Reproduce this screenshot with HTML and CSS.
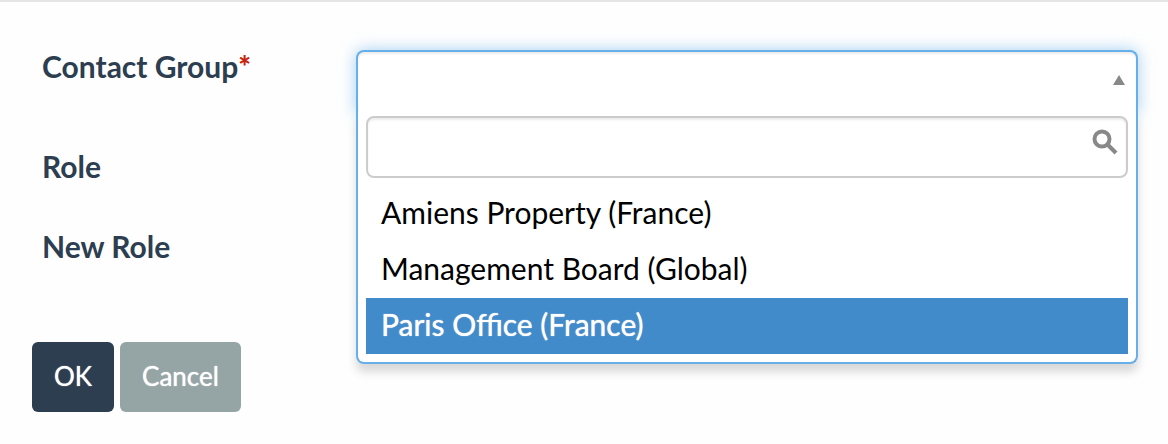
FILE: index.html
```html
<!DOCTYPE html>
<html lang="en">
<head>
<meta charset="utf-8">
<title>Contact Group</title>
<link rel="stylesheet" href="styles.css">
</head>
<body>
<form class="form">
  <div class="field field-group">
    <label class="label" for="group">Contact Group<span class="required">*</span></label>
    <div class="picker">
      <button class="picker-toggle" id="group" type="button" aria-haspopup="listbox" aria-expanded="true">
        <svg class="arrow" viewBox="0 0 12 10" aria-hidden="true"><path d="M6 0L12 10H0Z"/></svg>
      </button>
      <div class="menu">
        <div class="search">
          <input class="search-input" type="text" aria-label="Search contact groups">
          <svg class="search-icon" viewBox="0 0 26 26" aria-hidden="true"><circle cx="10" cy="10" r="7.5"/><path d="M15.5 15.5L24 24"/></svg>
        </div>
        <ul class="options" role="listbox" aria-label="Contact groups">
          <li class="option" role="option" aria-selected="false">Amiens Property (France)</li>
          <li class="option" role="option" aria-selected="false">Management Board (Global)</li>
          <li class="option option-active" role="option" aria-selected="true">Paris Office (France)</li>
        </ul>
      </div>
    </div>
  </div>
  <div class="field"><span class="label">Role</span></div>
  <div class="field"><span class="label">New Role</span></div>
  <div class="actions">
    <button class="btn btn-primary" type="submit">OK</button>
    <button class="btn btn-secondary" type="button">Cancel</button>
  </div>
</form>
</body>
</html>
```

FILE: styles.css
```css
* {
  box-sizing: border-box;
}

body {
  margin: 0;
  background: #fefefe;
  color: #000;
  font-family: Lato, "Liberation Sans", sans-serif;
  font-size: 30px;
  line-height: 40px;
}

.form {
  padding: 44px 30px 32px 32px;
  border-top: 2px solid #e5e5e5;
}

.field {
  display: grid;
  grid-template-columns: 324px 1fr;
  margin-bottom: 40px;
}

.field-group {
  margin-bottom: 32px;
}

.label {
  padding-left: 10px;
  color: #2c3e50;
  font-weight: 700;
}

.required {
  color: #c9210b;
  font-weight: 900;
}

.picker {
  position: relative;
  padding-top: 4px;
}

.picker-toggle {
  display: flex;
  align-items: center;
  justify-content: flex-end;
  width: 100%;
  height: 64px;
  padding: 0 11px 6px;
  border: 2px solid #66afe9;
  border-bottom: 0;
  border-radius: 8px 8px 0 0;
  background: #fff;
  box-shadow: inset 0 2px 2px rgba(0, 0, 0, 0.075), 0 0 16px rgba(102, 175, 233, 0.6);
}

.arrow {
  width: 12px;
  height: 10px;
  fill: #888;
}

.menu {
  position: absolute;
  top: 66px;
  left: 0;
  right: 0;
  padding: 4px 8px 8px;
  border: 2px solid #66afe9;
  border-top: 0;
  border-radius: 0 0 8px 8px;
  background: #fff;
  box-shadow: 0 8px 10px rgba(0, 0, 0, 0.15);
}

.search {
  position: relative;
  margin-bottom: 8px;
}

.search-input {
  display: block;
  width: 100%;
  height: 62px;
  padding: 0 48px 0 14px;
  border: 2px solid #ccc;
  border-radius: 8px;
  outline: 0;
  background: #fff;
  box-shadow: inset 0 2px 2px rgba(0, 0, 0, 0.075);
  font: inherit;
}

.search-icon {
  position: absolute;
  top: 13px;
  right: 10px;
  width: 26px;
  height: 26px;
  fill: none;
  stroke: #888;
  stroke-width: 4;
}

.options {
  margin: 0;
  padding: 0;
  list-style: none;
}

.option {
  padding: 6px 15px 10px;
}

.option-active {
  background: #428bca;
  color: #fff;
  text-shadow: 0 0 1px #fff;
}

.actions {
  display: flex;
  gap: 6px;
  padding-top: 36px;
}

.btn {
  padding: 14px 22px 16px;
  border: 0;
  border-radius: 6px;
  color: #fff;
  font: 400 26px/40px Lato, "Liberation Sans", sans-serif;
  text-shadow: 0 0 1px #fff;
}

.btn-primary {
  background: #2c3e50;
}

.btn-secondary {
  background: #95a5a6;
}
```
